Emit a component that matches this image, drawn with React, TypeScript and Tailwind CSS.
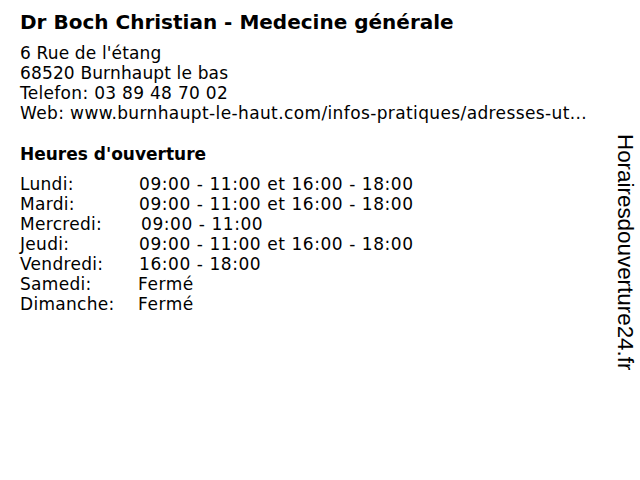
import React from "react";

const hours = [
  { day: "Lundi:", time: "09:00 - 11:00 et 16:00 - 18:00", pad: "pl-0" },
  { day: "Mardi:", time: "09:00 - 11:00 et 16:00 - 18:00", pad: "pl-0" },
  { day: "Mercredi:", time: "09:00 - 11:00", pad: "pl-[2px]" },
  { day: "Jeudi:", time: "09:00 - 11:00 et 16:00 - 18:00", pad: "pl-0" },
  { day: "Vendredi:", time: "16:00 - 18:00", pad: "pl-0" },
  { day: "Samedi:", time: "Fermé", pad: "-ml-[1px]" },
  { day: "Dimanche:", time: "Fermé", pad: "-ml-[1px]" },
];

const App = () => {
  return (
    <div className="w-[640px] h-[480px] bg-white text-black flex font-['DejaVu_Sans',sans-serif]">
      <div className="flex-1 pl-5 pt-[10px]">
        <h1 className="text-[20px] leading-[24px] font-bold">Dr Boch Christian - Medecine générale</h1>
        <div className="mt-[9px] text-[17px] leading-[20px] tracking-[0.38px]">
          <p className="tracking-[0.15px]">6 Rue de l'étang</p>
          <p className="tracking-[0.15px]">68520 Burnhaupt le bas</p>
          <p className="tracking-[0.3px]">Telefon: 03 89 48 70 02</p>
          <p>Web: www.burnhaupt-le-haut.com/infos-pratiques/adresses-ut...</p>
        </div>
        <h2 className="mt-[21px] text-[17px] leading-[20px] font-bold">Heures d'ouverture</h2>
        <div className="mt-[10px] text-[17px] leading-[20px]">
          {hours.map((h) => (
            <div key={h.day} className="flex">
              <span className="w-[119px] tracking-[0.3px]">{h.day}</span>
              <span className={`${h.pad} tracking-[0.56px]`}>{h.time}</span>
            </div>
          ))}
        </div>
      </div>
      <div className="w-[30px] pt-[134px] flex justify-center">
        <span className="[writing-mode:vertical-rl] font-['Liberation_Sans',sans-serif] text-[22.4px] leading-[24px]">
          Horairesdouverture24.fr
        </span>
      </div>
    </div>
  );
};

export default App;
